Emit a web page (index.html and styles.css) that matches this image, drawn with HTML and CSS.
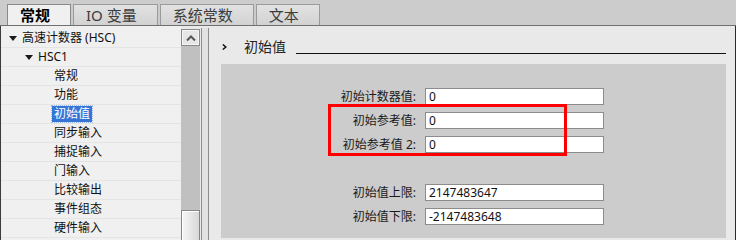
FILE: index.html
```html
<!DOCTYPE html>
<html lang="zh-CN">
<head>
    <meta charset="UTF-8">
    <title>HSC1 初始值</title>
    <link rel="stylesheet" href="styles.css">
</head>
<body>
    <div class="tabs">
        <div class="tab active">常规</div>
        <div class="tab">IO 变量</div>
        <div class="tab">系统常数</div>
        <div class="tab">文本</div>
    </div>
    <div class="main">
        <div class="tree">
            <div class="node lv0"><span class="caret"></span>高速计数器 (HSC)</div>
            <div class="node lv1"><span class="caret"></span>HSC1</div>
            <div class="node lv2"><span>常规</span></div>
            <div class="node lv2"><span>功能</span></div>
            <div class="node lv2"><span class="selected">初始值</span></div>
            <div class="node lv2"><span>同步输入</span></div>
            <div class="node lv2"><span>捕捉输入</span></div>
            <div class="node lv2"><span>门输入</span></div>
            <div class="node lv2"><span>比较输出</span></div>
            <div class="node lv2"><span>事件组态</span></div>
            <div class="node lv2"><span>硬件输入</span></div>
        </div>
        <div class="vscroll">
            <div class="scroll-btn">
                <svg width="10" height="6" viewBox="0 0 10 6"><polyline points="1,5.5 5,1.5 9,5.5" fill="none" stroke="#555" stroke-width="2"/></svg>
            </div>
            <div class="track"></div>
            <div class="thumb"></div>
        </div>
        <div class="splitter"></div>
        <div class="content">
            <div class="section-head">
                <svg class="chevron" width="5" height="6" viewBox="0 0 5 6"><polyline points="0.8,0.5 3.8,3 0.8,5.5" fill="none" stroke="#111" stroke-width="1.5"/></svg>
                <span class="section-title">初始值</span>
                <div class="rule"></div>
            </div>
            <div class="box">
                <div class="row">
                    <label class="label">初始计数器值:</label>
                    <div class="field">0</div>
                </div>
                <div class="row">
                    <label class="label">初始参考值:</label>
                    <div class="field">0</div>
                </div>
                <div class="row">
                    <label class="label">初始参考值 2:</label>
                    <div class="field">0</div>
                </div>
                <div class="row spacer"></div>
                <div class="row">
                    <label class="label">初始值上限:</label>
                    <div class="field">2147483647</div>
                </div>
                <div class="row">
                    <label class="label">初始值下限:</label>
                    <div class="field">-2147483648</div>
                </div>
                <div class="highlight"></div>
            </div>
        </div>
    </div>
</body>
</html>
```

FILE: styles.css
```css
body {
    margin: 0;
    width: 736px;
    height: 240px;
    overflow: hidden;
    font-family: "Noto Sans", "Noto Sans CJK SC", sans-serif;
    font-size: 12px;
    color: #1a1a1a;
    background-color: #e9e9e9;
}
.tabs {
    display: flex;
    align-items: flex-end;
    gap: 2px;
    height: 25px;
    padding-left: 7px;
    background-color: #cccccc;
    border-bottom: 1px solid #707070;
}
.tab {
    height: 21px;
    box-sizing: border-box;
    padding: 0 20px 0 12px;
    border: 1px solid #9a9a9a;
    border-bottom: none;
    background: linear-gradient(#e2e2e2, #d2d2d2);
    font-size: 15px;
    line-height: 20px;
    color: #3c3c3c;
}
.tab.active {
    background: #f0f0f0;
    color: #000;
    font-weight: bold;
    border-color: #8a8a8a;
}
.main {
    display: flex;
    height: 214px;
}
.tree {
    width: 180px;
    padding-top: 3px;
    background-color: #f0f0f0;
    border-left: 1px solid #3c3c3c;
}
.node {
    display: flex;
    align-items: center;
    height: 18px;
    border-bottom: 1px solid #e4e4e4;
    line-height: 16px;
    white-space: nowrap;
    color: #111;
}
.lv0 {
    padding-left: 8px;
}
.lv1 {
    padding-left: 24px;
}
.lv2 {
    padding-left: 51px;
}
.lv2 span {
    padding: 0 2px;
}
.caret {
    width: 0;
    height: 0;
    margin-right: 5px;
    border-left: 4px solid transparent;
    border-right: 4px solid transparent;
    border-top: 5px solid #1a1a1a;
}
.selected {
    background-color: #3674d6;
    color: #fff;
    outline: 1px dotted #9bb8e6;
}
.vscroll {
    display: flex;
    flex-direction: column;
    width: 19px;
    margin-top: 3px;
    background-color: #f0f0f0;
}
.scroll-btn {
    display: flex;
    justify-content: center;
    align-items: center;
    height: 17px;
    box-sizing: border-box;
    border: 1px solid #8a8a8a;
    background-color: #e6e6e6;
    box-shadow: inset 0 0 0 1px #f6f6f6;
}
.track {
    flex: 1;
    background-color: #c0c0c0;
}
.thumb {
    height: 30px;
    box-sizing: border-box;
    border: 1px solid #868686;
    border-bottom: none;
    background: linear-gradient(90deg, #f6f6f6, #d8d8d8);
    box-shadow: inset 1px 1px 0 #ffffff;
}
.splitter {
    width: 8px;
    box-sizing: border-box;
    margin: 2px 0 0 1px;
    border-left: 1px solid #8c8c8c;
    border-right: 1px solid #8c8c8c;
    background-color: #e2e2e2;
}
.content {
    display: flex;
    flex-direction: column;
    flex: 1;
    padding: 0 9px 2px 12px;
    background-color: #e9e9e9;
    border-right: 1px solid #2a2a2a;
}
.section-head {
    display: flex;
    align-items: center;
    height: 34px;
    padding-top: 4px;
}
.chevron {
    margin-left: 1px;
}
.section-title {
    margin-left: 17px;
    font-size: 14px;
    line-height: 18px;
    color: #222;
}
.rule {
    flex: 1;
    height: 1px;
    margin: 12px 0 0 10px;
    background-color: #111;
}
.box {
    position: relative;
    flex: 1;
    padding-top: 24px;
    background-color: #cccccc;
}
.row {
    display: flex;
    align-items: center;
    gap: 9px;
    height: 17px;
    margin-bottom: 7px;
}
.label {
    width: 195px;
    text-align: right;
    line-height: 17px;
    white-space: nowrap;
}
.field {
    width: 179px;
    height: 17px;
    box-sizing: border-box;
    padding-left: 3px;
    border: 1px solid #8c8c8c;
    background-color: #fff;
    line-height: 15px;
    color: #111;
}
.highlight {
    position: absolute;
    left: 107px;
    top: 40px;
    width: 239px;
    height: 52px;
    box-sizing: border-box;
    border: 3px solid #ff0000;
}
```
